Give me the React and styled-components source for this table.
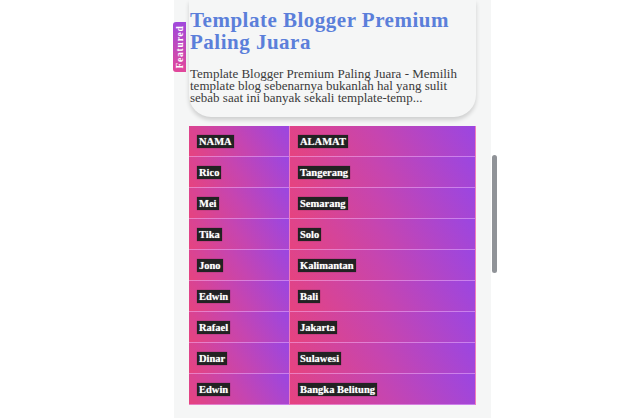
import React from "react";
import styled, { createGlobalStyle } from "styled-components";

const Global = createGlobalStyle`
  html, body { margin: 0; padding: 0; background: #ffffff; }
  body { width: 620px; height: 418px; overflow: hidden; }
`;

const Page = styled.div`
  display: flex;
  height: 418px;
  padding-left: 174px;
`;

const Panel = styled.div`
  width: 317px;
  height: 418px;
  background: #f5f6f6;
  box-sizing: border-box;
  padding: 0 15px;
  display: flex;
  flex-direction: column;
  gap: 9px;
`;

const Track = styled.div`
  width: 7px;
  padding-left: 1px;
`;

const Thumb = styled.div`
  margin-top: 155px;
  width: 5px;
  height: 118px;
  border-radius: 3px;
  background: #909398;
`;

const Card = styled.div`
  position: relative;
  background: #f5f6f6;
  border-radius: 0 0 22px 22px;
  box-shadow: 0 3px 4px rgba(0, 0, 0, 0.16);
  padding: 9px 12px 13px 1px;
`;

const Badge = styled.div`
  position: absolute;
  left: -16px;
  top: 22px;
  width: 13px;
  height: 50px;
  border-radius: 3px 0 0 3px;
  background: linear-gradient(to bottom, #a049dc, #e2479a);
  display: flex;
  align-items: center;
  justify-content: center;
`;

const BadgeText = styled.span`
  transform: rotate(-90deg);
  white-space: nowrap;
  color: #fff;
  font-family: "Liberation Serif", serif;
  font-weight: bold;
  font-size: 9.5px;
  letter-spacing: 0.8px;
`;

const Title = styled.h2`
  margin: 0;
  font-family: "Liberation Serif", serif;
  font-weight: bold;
  font-size: 21px;
  line-height: 22px;
  letter-spacing: 0.5px;
  color: #5b7fda;
`;

const Desc = styled.p`
  margin: 15px 0 0;
  font-family: "Liberation Serif", serif;
  font-size: 13px;
  line-height: 12px;
  color: #3a3a3a;
`;

const Table = styled.div`
  display: grid;
  grid-template-columns: 101px 186px;
  width: 287px;
`;

const Cell = styled.div`
  height: 31px;
  box-sizing: border-box;
  padding-left: 8px;
  display: flex;
  align-items: center;
  background: linear-gradient(55deg, #e6437f 0%, #c645b0 50%, #9a46e2 100%);
  border-bottom: 1px solid rgba(255, 200, 255, 0.45);
  border-right: 1px solid rgba(255, 200, 255, 0.45);
`;

const Label = styled.span`
  background: #222;
  color: #fff;
  font-family: "Liberation Serif", serif;
  font-weight: bold;
  font-size: 10.5px;
  line-height: 13px;
  padding: 0 2px;
  text-shadow: 0 0 1px rgba(255, 255, 255, 0.6);
  box-shadow: 0 0 1px rgba(0, 0, 0, 0.5);
`;

const rows = [
  ["Rico", "Tangerang"],
  ["Mei", "Semarang"],
  ["Tika", "Solo"],
  ["Jono", "Kalimantan"],
  ["Edwin", "Bali"],
  ["Rafael", "Jakarta"],
  ["Dinar", "Sulawesi"],
  ["Edwin", "Bangka Belitung"],
];

export default function App() {
  return (
    <>
      <Global />
      <Page>
        <Panel>
          <Card>
            <Badge>
              <BadgeText>Featured</BadgeText>
            </Badge>
            <Title>Template Blogger Premium Paling Juara</Title>
            <Desc>
              Template Blogger Premium Paling Juara - Memilih template blog
              sebenarnya bukanlah hal yang sulit sebab saat ini banyak sekali
              template-temp...
            </Desc>
          </Card>
          <Table>
            <Cell>
              <Label>NAMA</Label>
            </Cell>
            <Cell>
              <Label>ALAMAT</Label>
            </Cell>
            {rows.map(([n, a], i) => (
              <React.Fragment key={i}>
                <Cell>
                  <Label>{n}</Label>
                </Cell>
                <Cell>
                  <Label>{a}</Label>
                </Cell>
              </React.Fragment>
            ))}
          </Table>
        </Panel>
        <Track>
          <Thumb />
        </Track>
      </Page>
    </>
  );
}
